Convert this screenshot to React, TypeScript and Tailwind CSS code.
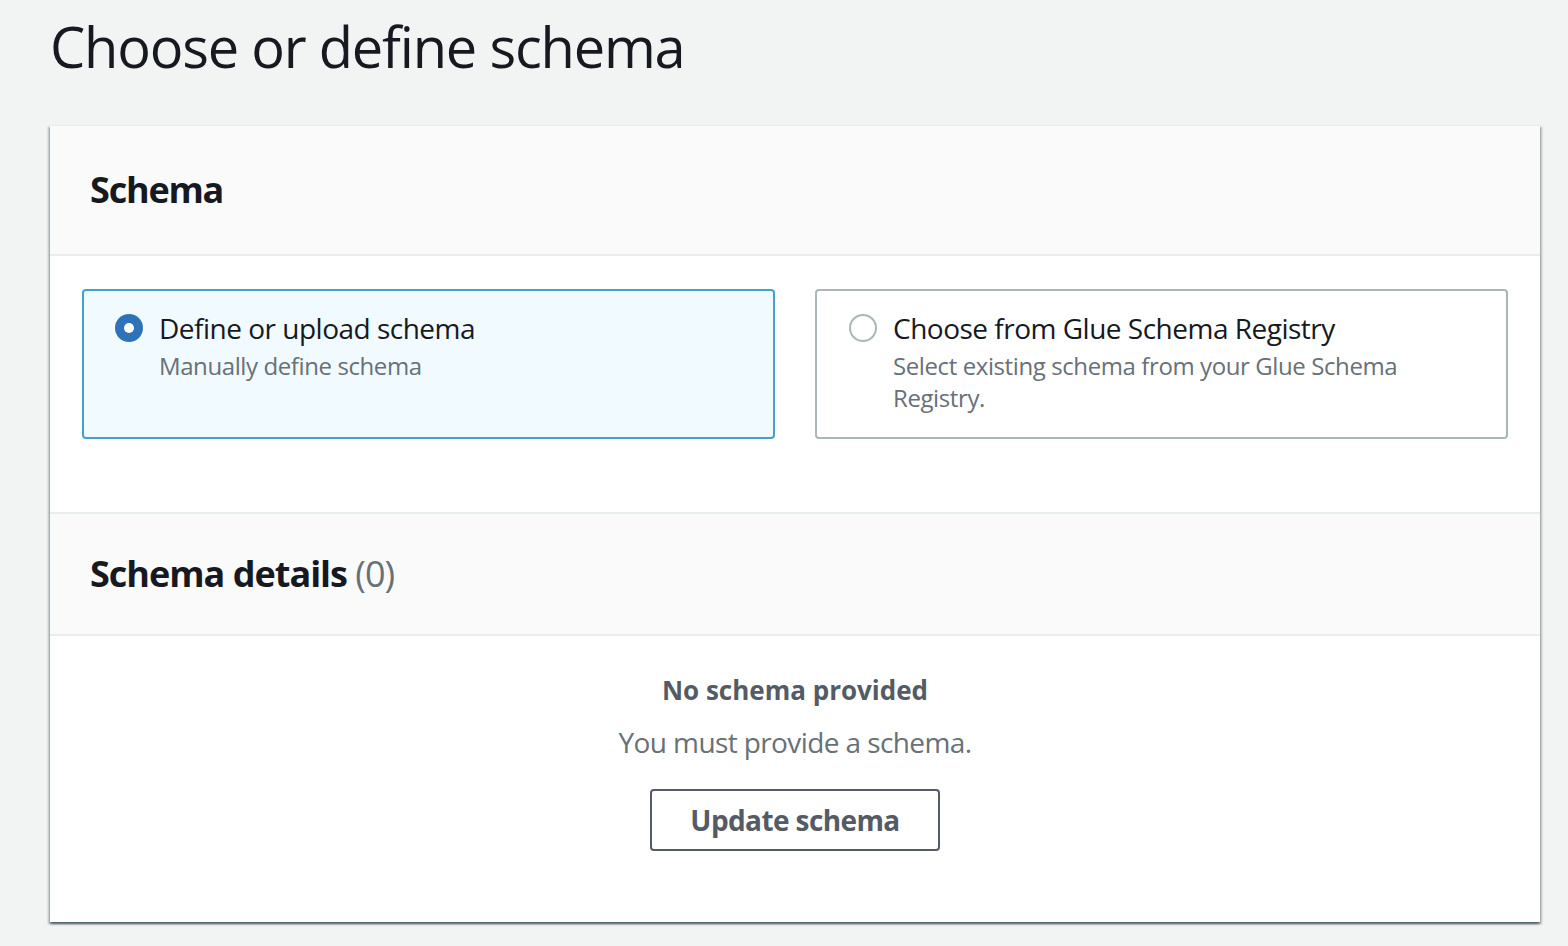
import React from "react";

const Radio = ({ checked }: { checked: boolean }) =>
  checked ? (
    <span className="mt-[8px] flex h-[28px] w-[28px] shrink-0 items-center justify-center rounded-full bg-[#2e73b8]">
      <span className="h-[10px] w-[10px] rounded-full bg-white" />
    </span>
  ) : (
    <span className="mt-[8px] h-[28px] w-[28px] shrink-0 rounded-full border-2 border-[#aab7b8] bg-white" />
  );

interface TileProps {
  checked: boolean;
  label: string;
  description: string;
}

const Tile = ({ checked, label, description }: TileProps) => (
  <div
    className={
      checked
        ? "flex gap-[16px] rounded-[4px] border-2 border-[#44a0cc] bg-[#f1faff] pl-[31px] pr-[30px] pt-[15px] pb-[20px]"
        : "flex gap-[16px] rounded-[4px] border-2 border-[#aab7b8] bg-white pl-[32px] pr-[30px] pt-[15px] pb-[20px]"
    }
  >
    <Radio checked={checked} />
    <div>
      <div className="text-[28px] leading-[44px] tracking-[-0.5px] text-[#16191f]">{label}</div>
      <div className="text-[24px] leading-[32px] tracking-[-0.4px] text-[#687078]">{description}</div>
    </div>
  </div>
);

export default function App() {
  return (
    <div className="min-h-screen bg-[#f2f3f3] font-['Open_Sans',sans-serif]">
      <div className="pl-[50px] pt-[14px]">
        <h1 className="text-[56px] leading-[64px] tracking-[-1.2px] text-[#16191f]">Choose or define schema</h1>
      </div>
      <div className="ml-[50px] mr-[28px] mt-[47px] border-t border-[#eaeded] bg-white shadow-[0_2px_2px_0_rgba(0,28,36,0.5),2px_2px_2px_0_rgba(0,28,36,0.2),-2px_2px_2px_0_rgba(0,28,36,0.2)]">
        <div className="flex h-[130px] items-center border-b-2 border-[#eaeded] bg-[#fafafa] px-[40px]">
          <h2 className="text-[36px] font-bold tracking-[-1.2px] text-[#16191f]">Schema</h2>
        </div>
        <div className="px-[32px] pt-[33px] pb-[73px]">
          <div className="grid h-[150px] grid-cols-2 gap-[40px]">
            <Tile checked label="Define or upload schema" description="Manually define schema" />
            <Tile
              checked={false}
              label="Choose from Glue Schema Registry"
              description="Select existing schema from your Glue Schema Registry."
            />
          </div>
        </div>
        <div className="flex h-[124px] items-center border-y-2 border-[#eaeded] bg-[#fafafa] px-[40px]">
          <h2 className="text-[36px] font-bold tracking-[-1px] text-[#16191f]">
            Schema details <span className="font-normal text-[#687078]">(0)</span>
          </h2>
        </div>
        <div className="flex flex-col items-center pt-[34px] pb-[71px]">
          <div className="text-[26px] font-bold leading-[40px] text-[#545b64]">No schema provided</div>
          <div className="mt-[12px] text-[28px] leading-[40px] tracking-[-0.6px] text-[#687078]">
            You must provide a schema.
          </div>
          <button className="mt-[27px] flex h-[62px] w-[290px] items-center justify-center rounded-[4px] border-2 border-[#545b64] bg-white text-[28px] font-bold tracking-[-0.6px] text-[#545b64]">
            Update schema
          </button>
        </div>
      </div>
    </div>
  );
}
